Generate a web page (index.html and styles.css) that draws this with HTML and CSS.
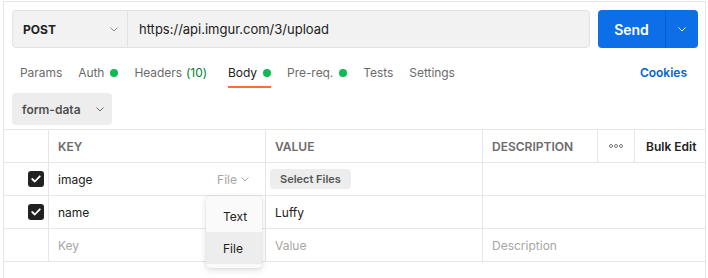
FILE: index.html
```html
<!DOCTYPE html>
<html>
<head>
<meta charset="utf-8">
<link rel="stylesheet" href="styles.css">
</head>
<body>
<div class="panel">
  <div class="reqbar">
    <div class="urlgroup">
      <div class="method"><span class="method-label">POST</span><svg class="chev" width="8" height="5" viewBox="0 0 8 5"><path d="M0.5 0.5 L4 4 L7.5 0.5" fill="none" stroke="#8a8a8a" stroke-width="1"/></svg></div>
      <div class="url">https://api.imgur.com/3/upload</div>
    </div>
    <div class="send">
      <span class="send-label">Send</span>
      <span class="send-arrow"><svg width="8" height="5" viewBox="0 0 8 5"><path d="M0.5 0.5 L4 4 L7.5 0.5" fill="none" stroke="#ffffff" stroke-width="1"/></svg></span>
    </div>
  </div>

  <div class="tabs">
    <div class="tablist">
      <span class="tab">Params</span>
      <span class="tab">Auth<i class="dot"></i></span>
      <span class="tab">Headers <span class="count">(10)</span></span>
      <span class="tab active">Body<i class="dot"></i></span>
      <span class="tab">Pre-req.<i class="dot"></i></span>
      <span class="tab">Tests</span>
      <span class="tab">Settings</span>
    </div>
    <span class="cookies">Cookies</span>
  </div>

  <div class="bodytype">
    <div class="mode">form-data<svg width="8" height="5" viewBox="0 0 8 5"><path d="M0.5 0.5 L4 4 L7.5 0.5" fill="none" stroke="#6b6b6b" stroke-width="1"/></svg></div>
  </div>

  <div class="table">
    <div class="cell head"></div>
    <div class="cell head">KEY</div>
    <div class="cell head">VALUE</div>
    <div class="cell head">DESCRIPTION</div>
    <div class="cell head center"><svg width="14" height="4" viewBox="0 0 14 4"><circle cx="2" cy="2" r="1.5" fill="none" stroke="#6b6b6b" stroke-width="0.9"/><circle cx="7" cy="2" r="1.5" fill="none" stroke="#6b6b6b" stroke-width="0.9"/><circle cx="12" cy="2" r="1.5" fill="none" stroke="#6b6b6b" stroke-width="0.9"/></svg></div>
    <div class="cell head bulk last">Bulk Edit</div>

    <div class="cell check"><span class="box"><svg width="10" height="8" viewBox="0 0 10 8"><path d="M1.2 4 L3.8 6.5 L8.8 1.3" fill="none" stroke="#fff" stroke-width="1.8" stroke-linecap="round" stroke-linejoin="round"/></svg></span></div>
    <div class="cell key"><span>image</span><span class="type">File<svg width="8" height="5" viewBox="0 0 8 5"><path d="M0.5 0.5 L4 4 L7.5 0.5" fill="none" stroke="#a6a6a6" stroke-width="1"/></svg></span></div>
    <div class="cell value"><span class="select-btn">Select Files</span></div>
    <div class="cell span3 last"></div>

    <div class="cell check"><span class="box"><svg width="10" height="8" viewBox="0 0 10 8"><path d="M1.2 4 L3.8 6.5 L8.8 1.3" fill="none" stroke="#fff" stroke-width="1.8" stroke-linecap="round" stroke-linejoin="round"/></svg></span></div>
    <div class="cell key"><span>name</span></div>
    <div class="cell value">Luffy</div>
    <div class="cell span3 last"></div>

    <div class="cell check"></div>
    <div class="cell key placeholder">Key</div>
    <div class="cell value placeholder">Value</div>
    <div class="cell span3 last placeholder">Description</div>

    <div class="menu">
      <div class="menu-item">Text</div>
      <div class="menu-item selected">File</div>
    </div>
  </div>
</div>
</body>
</html>
```

FILE: styles.css
```css
* { box-sizing: border-box; }
html, body { margin: 0; padding: 0; background: #ffffff; }
body {
  font-family: "Inter", "Noto Sans", sans-serif;
  font-size: 12px;
  color: #212121;
  width: 708px;
  height: 278px;
  overflow: hidden;
}
.panel {
  margin: 1px 2px 0 3px;
  border: 1px solid #e6e6e6;
  border-bottom: none;
  height: 277px;
}
.reqbar {
  display: flex;
  gap: 8px;
  padding: 8px 7px 0 8px;
  height: 46px;
}
.urlgroup {
  flex: 1;
  display: flex;
  background: #f2f2f2;
  border: 1px solid #e2e2e2;
  border-radius: 4px;
}
.method {
  width: 115px;
  border-right: 1px solid #e2e2e2;
  display: flex;
  align-items: center;
  justify-content: space-between;
  padding: 0 9px 0 10px;
}
.method-label { font-weight: 700; font-size: 12px; color: #212121; }
.url {
  display: flex;
  align-items: center;
  padding-left: 11px;
  font-size: 13px;
  color: #212121;
}
.send {
  width: 100px;
  display: flex;
  background: #0d6fe8;
  border-radius: 4px;
  color: #fff;
}
.send-label {
  width: 68px;
  border-right: 1px solid #0a5ccb;
  display: flex;
  align-items: center;
  justify-content: center;
  font-size: 14px;
  font-weight: 600;
}
.send-arrow {
  flex: 1;
  display: flex;
  align-items: center;
  justify-content: center;
}
.tabs {
  display: flex;
  justify-content: space-between;
  padding: 0 18px 0 16px;
  height: 40px;
}
.tablist { display: flex; gap: 16px; letter-spacing: -0.05px; }
.tab {
  display: flex;
  align-items: center;
  height: 40px;
  padding-top: 11px;
  border-bottom: 2px solid transparent;
  color: #6b6b6b;
  line-height: 16px;
}
.tab.active { color: #212121; border-bottom-color: #ff6c37; }
.count { color: #007f31; margin-left: 4px; }
.dot {
  display: inline-block;
  width: 8px;
  height: 8px;
  border-radius: 50%;
  background: #0cbb52;
  margin-left: 6px;
}
.tablist .tab:nth-child(3) { margin-right: 5px; }
.cookies {
  display: flex;
  align-items: center;
  padding-top: 11px;
  height: 38px;
  color: #0265d2;
  font-weight: 600;
}
.bodytype { padding: 5px 8px 0; height: 41px; }
.mode {
  width: 100px;
  height: 32px;
  background: #ededed;
  border-radius: 4px;
  display: flex;
  align-items: center;
  gap: 15px;
  padding-left: 10px;
  font-weight: 600;
  color: #505050;
}
.table {
  position: relative;
  display: grid;
  grid-template-columns: 45px 217px 217px 115px 37px 1fr;
  grid-auto-rows: 33px;
  border-top: 1px solid #e6e6e6;
}
.cell {
  border-right: 1px solid #e6e6e6;
  border-bottom: 1px solid #e6e6e6;
  display: flex;
  align-items: center;
  padding: 0 8px 0 9px;
  color: #212121;
}
.cell.last { border-right: none; }
.cell.span3 { grid-column: span 3; }
.head { color: #6b6b6b; font-weight: 600; }
.head.center { justify-content: center; padding: 0; }
.head.bulk { color: #212121; padding-left: 11px; }
.check { justify-content: flex-end; padding: 0 4px 0 0; }
.box {
  width: 16px;
  height: 16px;
  border-radius: 3px;
  background: #212121;
  display: flex;
  align-items: center;
  justify-content: center;
}
.key { justify-content: space-between; padding-right: 16px; }
.type { color: #a6a6a6; display: flex; align-items: center; gap: 4px; }
.value { padding-left: 9px; }
.select-btn {
  margin-left: -5px;
  height: 20px;
  padding: 0 10px;
  display: flex;
  align-items: center;
  background: #ededed;
  border-radius: 4px;
  font-size: 11px;
  font-weight: 600;
  color: #555555;
}
.placeholder { color: #a6a6a6; }
.menu {
  position: absolute;
  left: 202px;
  top: 66px;
  width: 56px;
  padding: 4px 0;
  background: #fafafa;
  border-radius: 4px;
  box-shadow: 0 2px 6px rgba(0,0,0,0.14), 0 0 1px rgba(0,0,0,0.18);
}
.menu-item {
  height: 32px;
  display: flex;
  align-items: center;
  padding-left: 17px;
  font-size: 12px;
  color: #212121;
}
.menu-item.selected { background: #ededed; }
```
